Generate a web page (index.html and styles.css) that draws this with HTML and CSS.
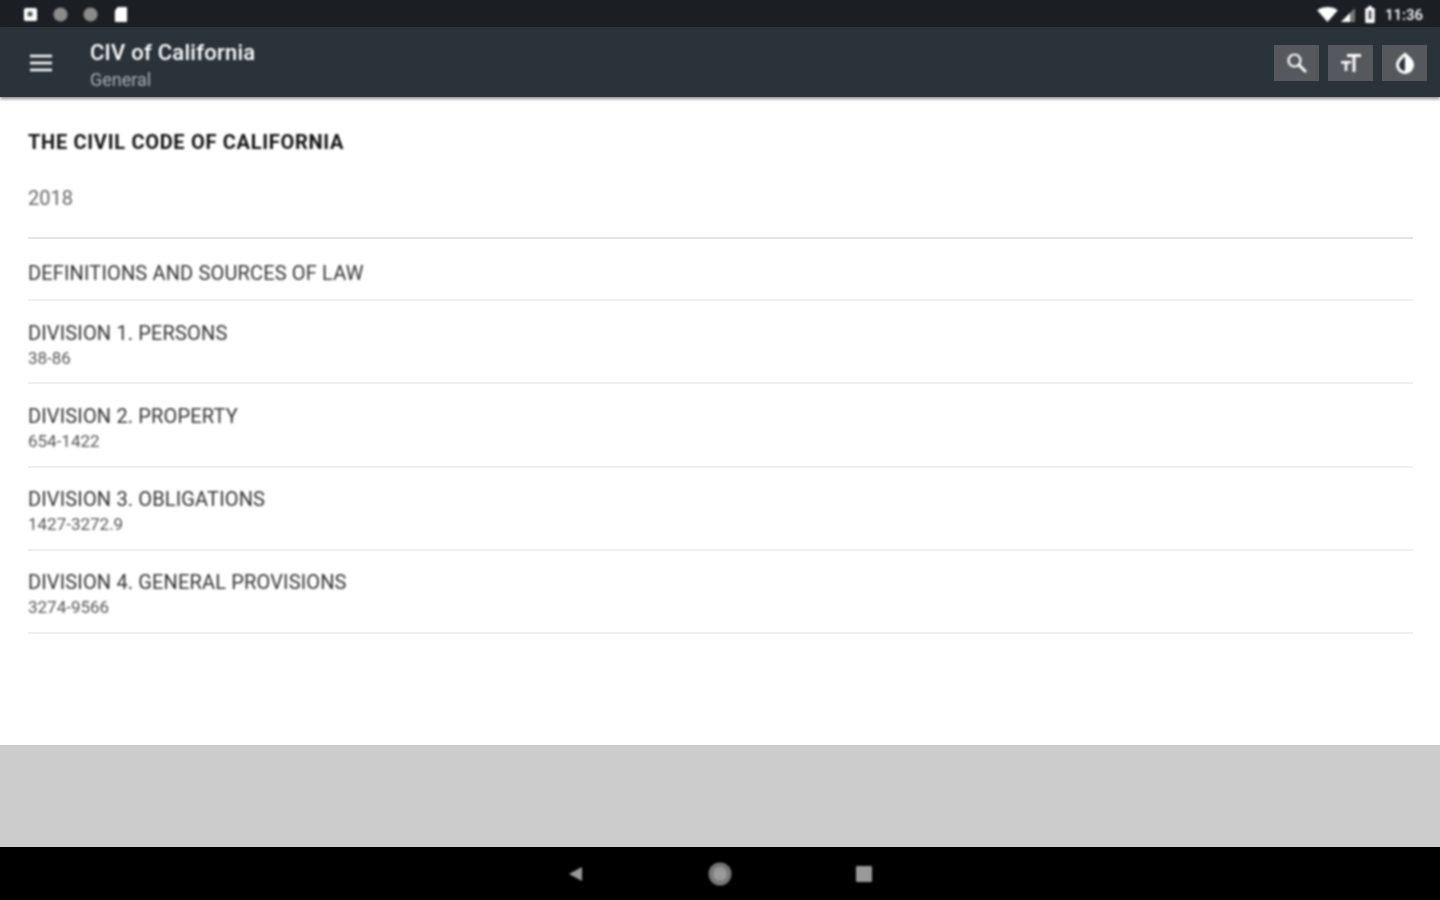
FILE: index.html
```html
<!DOCTYPE html>
<html lang="en">

<head>
  <meta charset="UTF-8">
  <meta name="viewport" content="width=device-width, initial-scale=1.0">
  <title>CIV of California</title>
  <link rel="stylesheet" href="styles.css">
</head>

<body>
  <div class="status-bar">
    <div class="status-left soft">
      <svg class="status-icon" viewBox="0 0 16 16"><rect x="1" y="1" width="14" height="14" rx="2" fill="#fff"/><rect x="5" y="5" width="5" height="5" fill="#555"/></svg>
      <svg class="status-icon" viewBox="0 0 16 16"><circle cx="8" cy="8" r="7.500" fill="#8b8b8b"/></svg>
      <svg class="status-icon" viewBox="0 0 16 16"><circle cx="8" cy="8" r="7.500" fill="#8b8b8b"/></svg>
      <svg class="status-icon" viewBox="0 0 16 16"><path d="M5 0h9a1 1 0 0 1 1 1v14a1 1 0 0 1-1 1H3a1 1 0 0 1-1-1V4z" fill="#fff"/></svg>
    </div>
    <div class="status-right soft">
      <svg class="wifi" viewBox="0 0 22 16"><path d="M0 3.500C6-1 16-1 22 3.500L11 16z" fill="#fff"/></svg>
      <svg class="signal" viewBox="0 0 16 16"><path d="M15 1v14H1z" fill="#777"/><path d="M10 6v9H1z" fill="#fff"/></svg>
      <svg class="battery" viewBox="0 0 10 18"><path d="M3 0h4v2h2a1 1 0 0 1 1 1v14a1 1 0 0 1-1 1H1a1 1 0 0 1-1-1V3a1 1 0 0 1 1-1h2z" fill="#fff"/><rect x="3.500" y="5" width="3" height="9" fill="#555"/></svg>
      <span class="clock">11:36</span>
    </div>
  </div>

  <header class="toolbar">
    <button class="menu-button soft" aria-label="Menu">
      <svg viewBox="0 0 22 18" width="22" height="18"><path d="M0 2h22M0 9h22M0 16h22" stroke="#fff" stroke-width="2.500"/></svg>
    </button>
    <div class="toolbar-titles soft">
      <h1>CIV of California</h1>
      <p>General</p>
    </div>
    <div class="toolbar-actions">
      <button class="action" aria-label="Search">
        <svg class="soft" viewBox="0 0 24 24" width="24" height="24"><circle cx="9.500" cy="9.500" r="6" fill="none" stroke="#fff" stroke-width="2.200"/><path d="M14 14l7 7" stroke="#fff" stroke-width="2.800"/></svg>
      </button>
      <button class="action" aria-label="Text size">
        <svg class="soft" viewBox="0 0 24 24" width="24" height="24"><path d="M8 3h14v3h-5.500v15h-3V6H8zM2 10h10v2.500H8.300V20H5.700v-7.500H2z" fill="#fff"/></svg>
      </button>
      <button class="action" aria-label="Theme">
        <svg class="soft" viewBox="0 0 24 24" width="24" height="24"><path d="M12 1.500c5 4 9 8 9 12.500a9 9 0 0 1-18 0c0-4.500 4-8.500 9-12.500z" fill="#fff"/><path d="M12 5.500c-3 2.800-6 5.500-6 8.500a6 6 0 0 0 6 6z" fill="#2a333a"/></svg>
      </button>
    </div>
  </header>

  <main class="content">
    <section class="intro">
      <h2 class="soft">THE CIVIL CODE OF CALIFORNIA</h2>
      <p class="soft">2018</p>
    </section>
    <ul class="divisions">
      <li class="single"><span class="name soft">DEFINITIONS AND SOURCES OF LAW</span></li>
      <li><span class="name soft">DIVISION 1. PERSONS</span><span class="range soft">38-86</span></li>
      <li><span class="name soft">DIVISION 2. PROPERTY</span><span class="range soft">654-1422</span></li>
      <li><span class="name soft">DIVISION 3. OBLIGATIONS</span><span class="range soft">1427-3272.9</span></li>
      <li><span class="name soft">DIVISION 4. GENERAL PROVISIONS</span><span class="range soft">3274-9566</span></li>
    </ul>
  </main>

  <div class="footer-band"></div>

  <nav class="nav-bar">
    <svg class="soft" viewBox="0 0 16 16" width="16" height="16"><path d="M14 1v14L1 8z" fill="#999"/></svg>
    <svg class="soft" viewBox="0 0 24 24" width="24" height="24"><circle cx="12" cy="12" r="11.500" fill="#777"/><circle cx="12" cy="12" r="7" fill="#999"/></svg>
    <svg class="soft" viewBox="0 0 16 16" width="16" height="16"><rect width="16" height="16" rx="1" fill="#999"/></svg>
  </nav>
</body>
</html>
```

FILE: styles.css
```css
html, body {
  height: 100%;
}

body {
  font-family: Roboto, sans-serif;
  margin: 0;
  padding: 0;
  height: 900px;
  display: flex;
  flex-direction: column;
  background-color: #ffffff;
  overflow: hidden;
}

/* the reference is a soft upscale, so text and icons get a slight blur */
.soft {
  filter: blur(0.8px);
}

.status-bar {
  height: 27px;
  flex: none;
  background-color: #1b1f23;
  display: flex;
  align-items: center;
  justify-content: space-between;
  padding: 2px 17px 0 23px;
  box-sizing: border-box;
}

.status-left {
  display: flex;
  align-items: center;
  gap: 15px;
}

.status-icon {
  width: 15px;
  height: 15px;
}

.status-right {
  display: flex;
  align-items: center;
}

.wifi {
  width: 21px;
  height: 15px;
}

.signal {
  width: 16px;
  height: 16px;
  margin-left: 2px;
}

.battery {
  width: 10px;
  height: 17px;
  margin-left: 9px;
}

.clock {
  color: #ffffff;
  font-size: 15px;
  font-weight: 500;
  margin-left: 10px;
}

.toolbar {
  height: 70px;
  flex: none;
  background-color: #2a333a;
  display: flex;
  align-items: center;
  padding: 0 13px 0 30px;
  box-shadow: 0 2px 3px rgba(0, 0, 0, 0.45);
  position: relative;
}

.menu-button {
  background: none;
  border: none;
  padding: 0;
  width: 60px;
  height: 18px;
  margin-top: 1px;
  text-align: left;
  line-height: 0;
}

.toolbar-titles {
  flex: 1;
  padding-top: 8px;
}

.toolbar-titles h1 {
  margin: 0;
  color: #ffffff;
  font-size: 22px;
  font-weight: 500;
  letter-spacing: 0.25px;
  line-height: 28px;
}

.toolbar-titles p {
  margin: 0;
  color: #a9afb3;
  font-size: 18px;
  line-height: 26px;
}

.toolbar-actions {
  display: flex;
  gap: 9px;
  padding-top: 2px;
}

.action {
  width: 45px;
  height: 36px;
  background-color: #55585c;
  border: none;
  padding: 0;
  display: flex;
  align-items: center;
  justify-content: center;
}

.content {
  flex: 1;
  padding: 0 27px 0 28px;
}

.intro {
  padding-top: 31px;
  height: 109px;
  border-bottom: 2px solid #e4e4e4;
  box-sizing: content-box;
}

.intro h2 {
  margin: 0;
  color: #111111;
  font-size: 20px;
  font-weight: 700;
  letter-spacing: 0.7px;
  line-height: 28px;
}

.intro p {
  margin: 28px 0 0;
  color: #666666;
  font-size: 20px;
  line-height: 28px;
}

.divisions {
  list-style: none;
  margin: 0;
  padding: 0;
}

.divisions li {
  height: 83.250px;
  box-sizing: border-box;
  padding-top: 6px;
  border-bottom: 2px solid #f0f0f0;
  display: flex;
  flex-direction: column;
  justify-content: center;
  color: #333333;
}

.divisions li.single {
  height: 62px;
  padding-top: 8px;
}

.name {
  font-size: 20px;
  letter-spacing: 0.15px;
  line-height: 26px;
}

.range {
  font-size: 17px;
  line-height: 24px;
  color: #555555;
}

.footer-band {
  height: 102px;
  flex: none;
  background-color: #cccccc;
}

.nav-bar {
  height: 53px;
  flex: none;
  background-color: #000000;
  display: flex;
  align-items: center;
  justify-content: center;
  gap: 124px;
}
```
